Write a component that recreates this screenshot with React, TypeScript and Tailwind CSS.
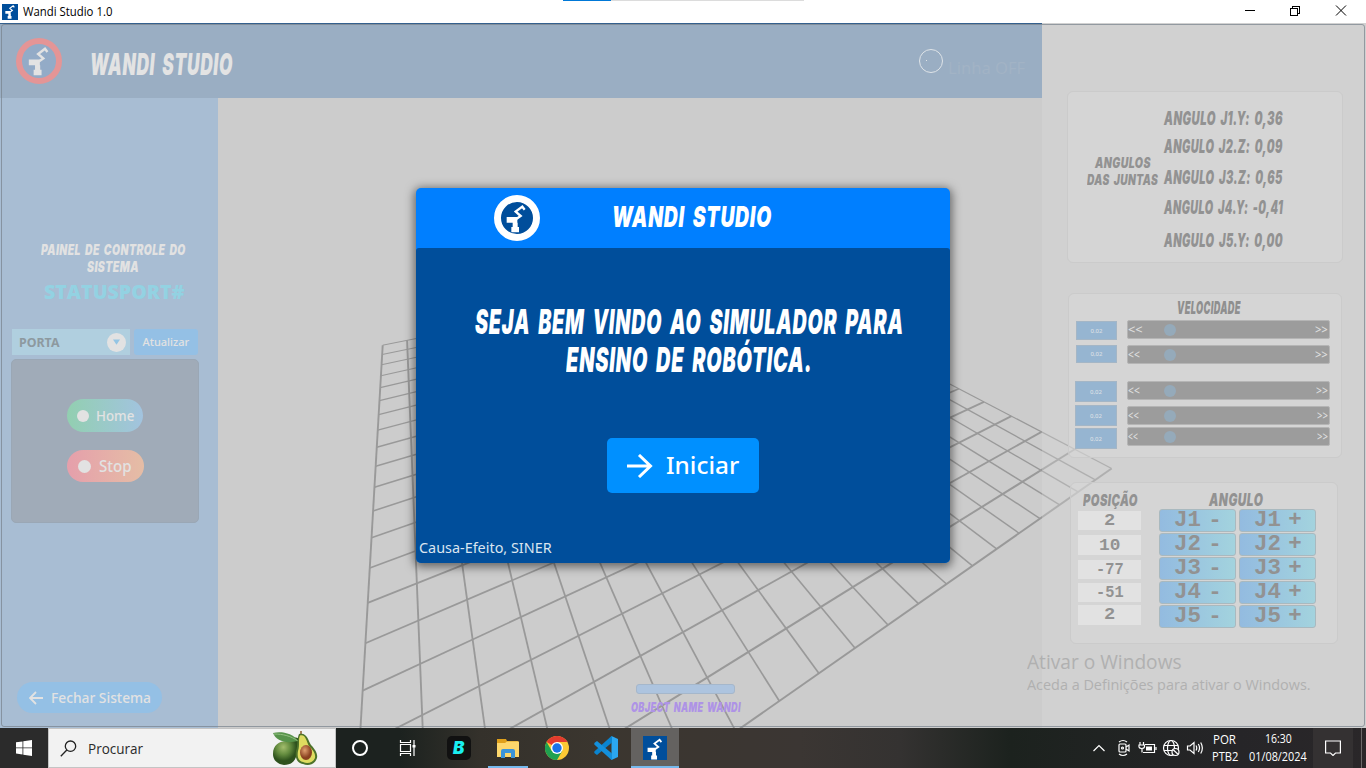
import React, { useLayoutEffect, useRef } from "react";

type FitProps = { w: number; className?: string; children: string };

/** Single line of text squeezed or stretched horizontally to a given width. */
function Fit({ w, className = "", children }: FitProps) {
  const ink = useRef<HTMLSpanElement>(null);
  useLayoutEffect(() => {
    if (!ink.current) return;
    ink.current.style.transform = "none";
    const natural = ink.current.offsetWidth;
    ink.current.style.transform = `scaleX(${w / natural})`;
  }, [w, children]);
  return (
    <span style={{ width: w }} className={`block shrink-0 whitespace-pre ${className}`}>
      <span ref={ink} className="inline-block origin-left">
        {children}
      </span>
    </span>
  );
}

const comic = "font-['Inter','Liberation_Sans',sans-serif] font-black italic tracking-[0.04em] [word-spacing:0.16em]";
const noto = "font-['Noto_Sans',sans-serif]";
const segoe = "font-['Open_Sans','Noto_Sans',sans-serif]";
const mono = "font-['Liberation_Mono',monospace] font-bold";

function Robot({ className = "" }: { className?: string }) {
  return (
    <svg viewBox="36 38 90 90" className={className}>
      <path d="M50 80H82V97H83V110H87V126H64V110H68V97H50Z" fill="currentColor" />
      <path d="M79 86L92 77L77 64L97 49L104 58" fill="none" stroke="currentColor" strokeWidth="7" />
    </svg>
  );
}

function FloorGrid() {
  const project = (k: number, m: number) => {
    const d = 1 + 0.01963 * k - 0.03628 * m;
    return [(382.7 + 32.347 * k - 14.41 * m) / d, (345.2 + 1.831 * k - 3.467 * m) / d];
  };
  const line = (a: number[], b: number[]) => `M${a[0]} ${a[1] - 23}L${b[0]} ${b[1] - 23}`;
  const steps = Array.from({ length: 21 }, (_, i) => i);
  return (
    <svg className="absolute inset-0 h-full w-full" viewBox="0 0 1366 705" fill="none" stroke="#999999">
      {steps.map((i) => (
        <path key={`m${i}`} d={line(project(0, i), project(20, i))} strokeWidth={1 + i * 0.05} />
      ))}
      {steps.map((i) => (
        <path key={`k${i}`} d={line(project(i, 0), project(i, 20))} strokeWidth={1.9 - i * 0.03} />
      ))}
    </svg>
  );
}

function TitleBar() {
  return (
    <div className="relative flex h-[23px] items-center bg-white">
      <div className="absolute top-0 left-[563px] flex h-px w-[241px] bg-[#dcdcdc]">
        <div className="h-px w-12 bg-[#0078d7]" />
      </div>
      <div className="ml-0.5 flex size-4 items-center justify-center bg-[#004e9b]">
        <Robot className="size-[15px] text-white" />
      </div>
      <Fit w={89} className={`ml-[5px] text-[12px] leading-4 text-black ${segoe}`}>Wandi Studio 1.0</Fit>
      <svg viewBox="0 0 110 12" className="mr-[14px] mb-[3px] ml-auto h-3 w-[110px]" fill="none" stroke="#000" shapeRendering="crispEdges">
        <path d="M3 6.5H13M48.5 4.5H55.5V11.5H48.5ZM50.5 4V2.500H57.5V9.500H56" />
        <path d="M94 1.5L104 11.5M104 1.5L94 11.5" shapeRendering="auto" />
      </svg>
    </div>
  );
}

function Header() {
  return (
    <div className="flex h-[75px] w-[1042px] shrink-0 items-center border-t border-[#34608e] bg-[#9aaec3]">
      <div className="mb-px ml-4 flex size-[46px] items-center justify-center rounded-full border-[6px] border-[#e49596] bg-[#93abc7]">
        <Robot className="size-[31px] text-[#e3e3e3]" />
      </div>
      <Fit w={143} className={`mt-1.5 ml-7 text-[30px] leading-8 text-[#e3e3e3] ${comic}`}>WANDI STUDIO</Fit>
      <div className="mb-px ml-auto flex size-6 items-center rounded-full border border-[#dfe4e8] pl-1.5">
        <div className="size-px bg-[#dfe4e8]" />
      </div>
      <Fit w={77} className={`mt-3.5 mr-[17px] ml-[5px] text-[17px] leading-5 text-[#a2b3c5] ${noto}`}>Linha OFF</Fit>
    </div>
  );
}

function Sidebar() {
  return (
    <div className="flex w-[218px] flex-col bg-[#a8bdd3]">
      <div className="mt-[143px] ml-2 flex w-[210px] flex-col items-center">
        <Fit w={145} className={`text-[14.5px] leading-[17px] text-[#e2e2e2] ${comic}`}>PAINEL DE CONTROLE DO</Fit>
        <Fit w={52} className={`text-[14.5px] leading-[17px] text-[#e2e2e2] ${comic}`}>SISTEMA</Fit>
      </div>
      <Fit w={141} className={`mt-[5px] ml-11 text-[20px] leading-6 font-extrabold text-[#93d2e2] ${segoe}`}>STATUSPORT#</Fit>
      <div className="mt-[25px] ml-3 flex">
        <div className="flex h-[26px] w-[118px] items-center bg-[#b0cfdf] pl-[7px]">
          <Fit w={40} className={`text-[13px] leading-4 font-bold text-[#8d999f] ${noto}`}>PORTA</Fit>
          <div className="mr-[4px] ml-auto flex size-[19px] items-center justify-center rounded-full bg-[#e2e2e2]">
            <svg viewBox="0 0 8 6" className="h-1.5 w-[7px]"><path d="M0 0H8L4 6Z" fill="#94c5e4" /></svg>
          </div>
        </div>
        <div className="ml-1 flex h-[26px] w-16 items-center justify-center rounded-[3px] bg-[#94c0e5]">
          <Fit w={47} className={`text-[11px] leading-4 font-medium text-[#e2e2e2] ${noto}`}>Atualizar</Fit>
        </div>
      </div>
      <div className="mt-1 ml-[11px] flex h-[164px] w-[188px] flex-col rounded-[5px] border border-[#9aa7b5] bg-[#a0abb8] pt-[39px] pl-[55px]">
        <div className="flex h-[33px] w-[76px] items-center rounded-full bg-linear-to-r from-[#92cfb0] to-[#a2c3df] pl-2.5">
          <div className="size-3 rounded-full bg-[#e2e2e2]" />
          <Fit w={38} className={`ml-[7px] text-[14px] leading-5 font-medium text-[#e2e2e2] ${noto}`}>Home</Fit>
        </div>
        <div className="mt-[18px] flex h-8 w-[77px] items-center rounded-full bg-linear-to-r from-[#e59fab] to-[#e5bda5] pl-[11px]">
          <div className="size-[13px] rounded-full bg-[#e2e2e2]" />
          <Fit w={33} className={`ml-2 text-[16px] leading-5 font-medium text-[#e2e2e2] ${noto}`}>Stop</Fit>
        </div>
      </div>
      <div className="mt-auto mb-[15px] ml-[17px] flex h-[31px] w-[145px] items-center rounded-full bg-[#94c0e5] pl-3">
        <svg viewBox="0 0 14 14" className="size-3.5" fill="none" stroke="#e2e2e2" strokeWidth="1.8"><path d="M14 7H1M7 1L1 7L7 13" /></svg>
        <Fit w={100} className={`ml-2 text-[13.5px] leading-5 font-medium text-[#e2e2e2] ${noto}`}>Fechar Sistema</Fit>
      </div>
    </div>
  );
}

const card = "rounded-md border border-[#cbcbcb] bg-[#dadada]/50";
const angleText = `text-[18.5px] leading-5 text-[#929292] ${comic}`;

function AnglesCard() {
  return (
    <div className={`mt-[68px] ml-[25px] flex h-[172px] w-[276px] ${card}`}>
      <div className="mt-[62px] ml-[19px] flex w-[71px] flex-col items-center">
        <Fit w={56} className={`text-[14.5px] leading-[17px] text-[#929292] ${comic}`}>ANGULOS</Fit>
        <Fit w={71} className={`text-[14.5px] leading-[17px] text-[#929292] ${comic}`}>DAS JUNTAS</Fit>
      </div>
      <div className="mt-4 ml-1.5 flex flex-col">
        <Fit w={119} className={angleText}>ANGULO J1.Y: 0,36</Fit>
        <Fit w={119} className={`mt-2 ${angleText}`}>ANGULO J2.Z: 0,09</Fit>
        <Fit w={119} className={`mt-[11px] ${angleText}`}>ANGULO J3.Z: 0,65</Fit>
        <Fit w={119} className={`mt-2.5 ${angleText}`}>ANGULO J4.Y: -0,41</Fit>
        <Fit w={119} className={`mt-[13px] ${angleText}`}>ANGULO J5.Y: 0,00</Fit>
      </div>
    </div>
  );
}

const speeds = [
  { value: "0.02", box: "h-[19px] w-[41px]", bar: "", left: 15, right: 13 },
  { value: "0,02", box: "mt-[5px] h-[18px] w-[41px]", bar: "mt-1.5", left: 12, right: 13 },
  { value: "0,02", box: "mt-[18px] h-[21px] w-[42px]", bar: "mt-[17px]", left: 12, right: 12 },
  { value: "0,02", box: "mt-[3px] h-[21px] w-[42px]", bar: "mt-1.5", left: 11, right: 11 },
  { value: "0,02", box: "mt-[2px] h-[21px] w-[42px]", bar: "mt-0.5", left: 10, right: 11 },
];

function SpeedCard() {
  return (
    <div className={`mt-[30px] ml-[26px] flex h-[165px] w-[274px] flex-col ${card}`}>
      <Fit w={64} className={`mt-[5px] ml-[108px] text-[18px] leading-[18px] text-[#8f8f8f] ${comic}`}>VELOCIDADE</Fit>
      <div className="mt-[3px] flex justify-between pr-[11px] pl-1.5">
        <div className="mt-px flex flex-col items-end">
          {speeds.map((s, i) => (
            <div key={i} className={`flex items-center justify-center border border-[#a4b6c6] bg-[#96b5d1] ${s.box}`}>
              <Fit w={12} className={`text-[6px] leading-2 font-medium text-[#d6dee4] ${noto}`}>{s.value}</Fit>
            </div>
          ))}
        </div>
        <div className="flex w-[203px] flex-col">
          {speeds.map((s, i) => (
            <div key={i} className={`flex h-[19px] items-center rounded-[2px] border border-[#b5b5b5] bg-[#9c9c9c] pr-0.5 ${s.bar}`}>
              <div className="w-9">
                <Fit w={s.left} className={`text-[12px] leading-4 font-medium text-[#dedede] ${noto}`}>{"<<"}</Fit>
              </div>
              <div className="size-3 rounded-full bg-[#95aaba]" />
              <Fit w={s.right} className={`-mr-px ml-auto text-[12px] leading-4 font-medium text-[#dedede] ${noto}`}>{">>"}</Fit>
            </div>
          ))}
        </div>
      </div>
    </div>
  );
}

const positions = [
  { value: "2", w: 11, box: "h-[19px]" },
  { value: "10", w: 21, box: "mt-[5px] h-5 pt-0.5" },
  { value: "-77", w: 28, box: "mt-[5px] h-[19px]" },
  { value: "-51", w: 28, box: "mt-1 h-[19px]" },
  { value: "2", w: 11, box: "mt-[3px] h-5" },
];

function JogButton({ label }: { label: string }) {
  return (
    <div className="flex h-[23px] w-[77px] items-center justify-center rounded-[3px] border border-[#a9b9bf] bg-linear-to-r from-[#93bbe0] to-[#a3d3de]">
      <Fit w={48} className={`text-[22px] leading-[22px] [word-spacing:-6px] text-[#929292] ${mono}`}>{label}</Fit>
    </div>
  );
}

function JogCard() {
  return (
    <div className={`mt-6 ml-7 flex h-[162px] w-[268px] ${card}`}>
      <div className="mt-1.5 ml-[7px] flex w-[63px] flex-col">
        <Fit w={55} className={`ml-[5px] text-[16.5px] leading-[22px] text-[#929292] ${comic}`}>POSIÇÃO</Fit>
        {positions.map((p, i) => (
          <div key={i} className={`flex items-center justify-center bg-[#e2e2e2] ${p.box}`}>
            <Fit w={p.w} className={`text-[17px] leading-[18px] text-[#929292] ${mono}`}>{p.value}</Fit>
          </div>
        ))}
      </div>
      <div className="mt-1.5 ml-[18px] flex flex-col gap-px">
        <Fit w={54} className={`ml-[50px] h-[19px] text-[17.5px] leading-[22px] text-[#929292] ${comic}`}>ANGULO</Fit>
        {[1, 2, 3, 4, 5].map((n) => (
          <div key={n} className="flex gap-[3px]">
            <JogButton label={`J${n} -`} />
            <JogButton label={`J${n} +`} />
          </div>
        ))}
      </div>
    </div>
  );
}

function WelcomeDialog() {
  return (
    <div className="absolute top-[165px] left-[416px] flex h-[375px] w-[534px] flex-col overflow-clip rounded-[5px] bg-[#007fff] shadow-[0_2px_10px_2px_rgba(0,0,0,0.5)]">
      <div className="flex h-[60px] shrink-0 items-center">
        <div className="ml-[78px] flex size-[46px] items-center justify-center rounded-full border-[7px] border-white bg-[#004e9b]">
          <Robot className="size-[30px] text-white" />
        </div>
        <Fit w={160} className={`mb-0.5 ml-[72px] text-[29px] leading-8 text-white ${comic}`}>WANDI STUDIO</Fit>
      </div>
      <div className="flex grow flex-col items-center rounded-t-[3px] bg-[#004e9b]">
        <Fit w={429} className={`mt-[55px] ml-3 text-[34px] leading-[38px] text-white ${comic}`}>SEJA BEM VINDO AO SIMULADOR PARA</Fit>
        <Fit w={247} className={`ml-3 text-[34px] leading-[38px] text-white ${comic}`}>ENSINO DE ROBÓTICA.</Fit>
        <div className="mt-[59px] flex h-[55px] w-[152px] items-center rounded-[5px] bg-[#0090ff] pl-5">
          <svg viewBox="0 0 26 24" className="h-6 w-[26px]" fill="none" stroke="#fff" strokeWidth="3"><path d="M0 12H23M12 1L23.500 12L12 23" /></svg>
          <Fit w={73} className={`mb-0.5 ml-[13px] text-[24px] leading-8 font-medium text-white ${noto}`}>Iniciar</Fit>
        </div>
        <Fit w={133} className={`mt-auto mr-auto mb-[5px] ml-[3px] text-[14.5px] leading-[22px] text-[#dbe5f0] ${noto}`}>Causa-Efeito, SINER</Fit>
      </div>
    </div>
  );
}

function Avocado() {
  return (
    <svg viewBox="0 0 46 36" className="h-9 w-[46px]">
      <defs>
        <radialGradient id="skin" cx=".4" cy=".35"><stop offset="0" stopColor="#a3bd6d" /><stop offset=".55" stopColor="#638b3e" /><stop offset="1" stopColor="#2e511d" /></radialGradient>
        <radialGradient id="seed" cx=".4" cy=".35"><stop offset="0" stopColor="#e0a06f" /><stop offset="1" stopColor="#8a4120" /></radialGradient>
      </defs>
      <path d="M1 24C1 15 7 11 15 11C20 9 25 5 27 10C27 18 26 22 24 27C22 33 17 35 12 35C5 34 1 30 1 24Z" fill="url(#skin)" />
      <path d="M1 3C9 1 21 3 26 11C14 14 4 11 1 3Z" fill="#57934b" />
      <path d="M2 4C11 4 19 6 26 11" stroke="#92c080" fill="none" />
      <path d="M29 1L29 5" stroke="#8b5a2b" strokeWidth="1.500" />
      <path d="M27 4C35 2 36 10 39 15C43 19 46 24 45 28C43 35 36 36 31 34C24 33 23 26 24 21C26 15 25 8 27 4Z" fill="#4d732a" />
      <path d="M28 5.500C34 4 34 11 37 16C41 20 44 24 43 28C41 33 35 34 31 32C26 31 25 26 26 21C28 15 26 9 28 5.500Z" fill="#dfdc60" />
      <ellipse cx="34" cy="22.500" rx="6" ry="7.500" fill="url(#seed)" />
    </svg>
  );
}

function Taskbar() {
  return (
    <div className="flex h-10 bg-[linear-gradient(90deg,#1c221f_0,#1c221f_400px,#34312b_480px,#3b362f_600px,#3b3633_800px,#343231_900px,#1c221e_1010px,#202322_1100px,#262528_1240px,#2a2729_1366px)]">
      <div className="flex w-12 items-center justify-center bg-[#2b2b2b]">
        <svg viewBox="0 0 16 16" className="size-4" fill="#fff"><path d="M0 2.300L6.500 1.400V7.500H0ZM7.300 1.300L16 0V7.500H7.300ZM0 8.300H6.500V14.500L0 13.600ZM7.300 8.300H16V16L7.300 14.700Z" /></svg>
      </div>
      <div className="flex w-[288px] items-center border border-[#c4c4c4] bg-[#f2f2f2] pl-[11px]">
        <svg viewBox="0 0 17 17" className="size-[17px]" fill="none" stroke="#222" strokeWidth="1.300"><circle cx="10.500" cy="6.200" r="5.200" /><path d="M6.800 10L.8 16.200" /></svg>
        <Fit w={55} className={`mt-px ml-[11px] text-[14px] leading-5 text-[#2b2b2b] ${segoe}`}>Procurar</Fit>
        <div className="mr-[17px] mb-px ml-auto"><Avocado /></div>
      </div>
      <div className="flex w-12 items-center justify-center"><div className="size-4 rounded-full border-2 border-white" /></div>
      <div className="flex w-12 items-center justify-center pr-px">
        <svg viewBox="0 0 17 16" className="h-4 w-[17px]" fill="none" stroke="#fff" strokeWidth="1.200"><path d="M1.500 0V2.500H11.500V0M1.500 4.500H11.500V11.500H1.500ZM1.500 16V13.500H11.500V16M15 0V16" /><path d="M13.500 5H16.500V7.500H13.500Z" fill="#fff" stroke="none" /></svg>
      </div>
      <div className="flex w-[54px] items-center justify-center">
        <div className="flex size-6 items-center justify-center rounded-[5px] bg-[#111111]">
          <span className={`text-[17px] leading-6 text-[#19eef0] ${comic}`}>B</span>
        </div>
      </div>
      <div className="ml-0.5 flex w-10 items-center justify-center border-b-2 border-[#76b9ed] pt-0.5">
        <svg viewBox="0 0 22 19" className="h-[19px] w-[22px]"><path d="M0 0H9L10 2H21V6H0Z" fill="#dfa01b" /><path d="M0 4L8 4L10 2.500H22V18H0Z" fill="#fdd76c" /><path d="M4 19V12Q4 10 6 10H16Q18 10 18 12V19H14V14H8V19Z" fill="#3b94d9" /></svg>
      </div>
      <div className="ml-[5px] flex w-12 items-center justify-center">
        <svg viewBox="0 0 24 24" className="size-6">
          <circle cx="12" cy="12" r="12" fill="#fcc934" />
          <path d="M12 12L1.600 6A12 12 0 0 1 22.400 6H12Z" fill="#e33b2e" />
          <path d="M1.600 6A12 12 0 0 0 12 24L17.200 15L12 12L6.800 15Z" fill="#1fa150" />
          <circle cx="12" cy="12" r="6" fill="#fff" /><circle cx="12" cy="12" r="4.700" fill="#1a73e8" />
        </svg>
      </div>
      <div className="flex w-[50px] items-center justify-center">
        <svg viewBox="0 0 24 24" className="size-6"><path d="M17.500 0L24 3V21L17.500 24Z" fill="#2ba7f0" /><path d="M18 0V6.500L3 19L.3 17V15.500L17.500 0Z" fill="#0a84cf" /><path d="M18 24V17.500L3 5L.3 7V8.500L17.500 24Z" fill="#1490dc" /></svg>
      </div>
      <div className="flex w-12 items-center justify-center border-b-2 border-[#76b9ed] bg-[#646260] pt-0.5">
        <div className="flex size-6 items-center justify-center bg-[#004e9b]"><Robot className="size-[23px] text-white" /></div>
      </div>
      <svg viewBox="0 0 112 18" className="mt-[11px] mr-2 ml-auto h-[18px] w-28" fill="none" stroke="#fff" strokeWidth="1.200">
        <path d="M1.500 12L7 6.500L12.500 12" />
        <rect x="27" y="5" width="7" height="8" rx="1" /><path d="M34 8L37 6V12L34 10M27 3Q31 0 35 3M27 15Q31 18 35 15" />
        <circle cx="30.500" cy="9" r="1" />
        <path d="M53 5.500H62.500V13.500H51M64 8V11" /><path d="M54 7.500H60V11.500H54Z" fill="#fff" stroke="none" /><path d="M48 3V5.500M51.500 3V5.500M47 6H52.500V8Q52 9.500 49.800 9.500Q47.500 9.500 47 8ZM50 9.500V13.500" />
        <circle cx="79" cy="9" r="7.500" /><ellipse cx="79" cy="9" rx="3.500" ry="7.500" /><path d="M72 6.500H86M72 11.500H80" />
        <circle cx="83.500" cy="13" r="3.500" fill="#242426" /><path d="M81.200 10.800L86 15.300" />
        <path d="M95.500 7H98L102 3.500V14.500L98 11H95.500ZM104 6.500Q105.500 9 104 11.500M106.300 5Q108.800 9 106.300 13M108.700 3.500Q112 9 108.700 14.500" />
      </svg>
      <div className={`flex w-[26px] flex-col items-start pt-[3px] text-[12px] leading-[17px] text-white ${segoe}`}>
        <Fit w={23} className="ml-px">POR</Fit>
        <Fit w={26}>PTB2</Fit>
      </div>
      <div className={`ml-[11px] flex w-[58px] flex-col items-center pt-0.5 text-[12px] leading-[18px] text-white ${segoe}`}>
        <Fit w={27}>16:30</Fit>
        <Fit w={58}>01/08/2024</Fit>
      </div>
      <div className="ml-1.5 flex w-10 items-center justify-center bg-[#343132]">
        <svg viewBox="0 0 16 16" className="size-4" fill="none" stroke="#fff" strokeWidth="1.200"><path d="M.6 1H15.400V13H10.500L8 15.500L5.500 13H.6Z" /></svg>
      </div>
      <div className="mr-1 ml-2 w-px bg-[#6b6969]" />
    </div>
  );
}

export default function App() {
  return (
    <div className="flex h-[768px] w-[1366px] flex-col overflow-hidden">
      <TitleBar />
      <div className="relative flex h-[705px] bg-[#cccccc]">
        <FloorGrid />
        <div className="relative flex w-[1042px] flex-col">
          <Header />
          <div className="flex grow">
            <Sidebar />
            <div className="flex grow flex-col items-start justify-end pb-[13px] pl-[413px]">
              <div className="ml-[5px] h-2.5 w-[99px] rounded-[3px] border border-[#a5b7cb] bg-[#adc4df]" />
              <Fit w={110} className={`mt-[5px] text-[13.5px] leading-4 text-[#ae93e6] ${comic}`}>OBJECT NAME WANDI</Fit>
            </div>
          </div>
        </div>
        <div className="relative flex w-[324px] flex-col bg-[#dbdbdb]/35">
          <AnglesCard />
          <SpeedCard />
          <JogCard />
        </div>
        <div className={`absolute top-[627px] left-[1027px] text-[#b0b0b0] ${segoe}`}>
          <Fit w={155} className="text-[19.500px] leading-6">Ativar o Windows</Fit>
          <Fit w={284} className="mt-px text-[14.500px] leading-5">Aceda a Definições para ativar o Windows.</Fit>
        </div>
        <div className="pointer-events-none absolute inset-x-px top-px bottom-px rounded-[3px] border border-[#78828c]/70" />
        <WelcomeDialog />
      </div>
      <Taskbar />
    </div>
  );
}
